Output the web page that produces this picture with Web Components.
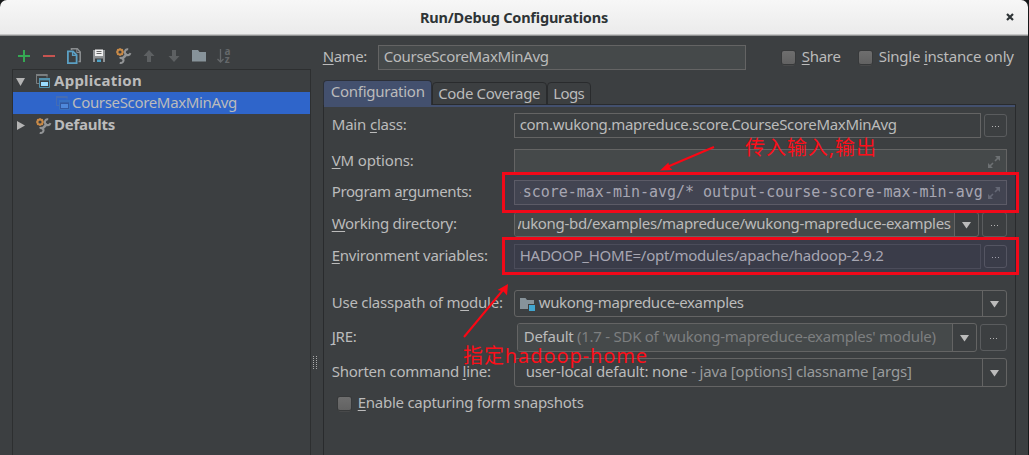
<!DOCTYPE html>
<html lang="en">
<head>
<meta charset="utf-8">
<title>Run/Debug Configurations</title>
<style>
html,body{margin:0;width:1029px;height:455px;overflow:hidden;background:#17191a}
body{font-family:"Noto Sans","Open Sans",sans-serif;font-size:15px;color:#bbb}
</style>
</head>
<body>
<run-dialog></run-dialog>
<script>
const define = (name, html, setup) => {
  const t = document.createElement('template');
  t.innerHTML = html;
  customElements.define(name, class extends HTMLElement {
    constructor() {
      super();
      this.attachShadow({mode: 'open'}).append(t.content.cloneNode(true));
    }
    connectedCallback() { if (setup) setup(this, this.shadowRoot); }
  });
};

const U = '<style>u{text-decoration:underline;text-decoration-thickness:1px;text-underline-offset:2px;text-decoration-skip-ink:none}.dim{color:#7d7f80}.mid{color:#999b9c}*{box-sizing:border-box}</style>';

/* Text run tracked so that it spans the width given in "w". */
define('fit-text', `<style>:host{display:block;flex:none;white-space:pre;line-height:20px;padding-bottom:var(--lift,4px)}span{display:inline-block;white-space:pre}</style><span><slot></slot></span>`, (el, r) => {
  const w = parseFloat(el.getAttribute('w'));
  const s = r.querySelector('span');
  const n = el.textContent.length;
  const real = s.getBoundingClientRect().width;
  if (real && w && n) s.style.letterSpacing = ((w - real) / n).toFixed(4) + 'px';
});

const wrench = `<g fill="none"><circle cx="4" cy="4" r="2.6" stroke="#c88a48" stroke-width="2"/><path d="M4 0v1.4M4 6.6V8M0 4h1.4M6.6 4H8M1.2 1.2l1 1M5.8 5.8l1 1M6.8 1.2l-1 1M1.2 6.8l1-1" stroke="#c88a48" stroke-width="1.2"/><path d="M5.6 11.4 11 6" stroke="#929496" stroke-width="2.6"/><path d="M12.2 1.3a2.9 2.9 0 1 0 2.3 3.9" stroke="#929496" stroke-width="2"/><path d="M3.6 10.3a2.5 2.5 0 1 1 .2 4.3" stroke="#929496" stroke-width="2"/></g>`;
const appIcon = `<path d="M.5 9.5v-9h10.5v3M.5 9.5H3" fill="none" stroke="#7b7f81"/><path d="M0 0h11.5v2H0z" fill="#7b7f81"/><path d="M3.5 4.5h10v9h-10z" fill="#3c3f41" stroke="#5292ad"/><path d="M3 4h11v2.4H3z" fill="#5292ad"/><path d="M5 8h7v4H5z" fill="#9bdcff"/>`;
const icons = {
  add: '<path d="M2 8h12M8 2v12" stroke="#35a853" stroke-width="2"/>',
  remove: '<path d="M2 8h12" stroke="#c75450" stroke-width="2"/>',
  copy: '<path d="M5.5 1V.8h5.8L14.2 4v9.5H12.5M5.5 1v1" fill="none" stroke="#8a8d8f" stroke-width="1.6"/><path d="M10.8 1v3.5h3.5" fill="none" stroke="#8a8d8f"/><path d="M1.9 3.4h5L10.6 7v8.2H1.9z" fill="#3c3f41" stroke="#5ba0c4" stroke-width="1.8"/><path d="M6.6 3v4.4H11" fill="none" stroke="#5ba0c4" stroke-width="1.4"/>',
  save: '<path d="M2 2h12v12H2z" fill="#8f9294"/><path d="M4 1.5h8V8H4z" fill="#f0f0f0"/><path d="M5.5 3.5h5M5.5 5.5h5" stroke="#666"/><path d="M4 10.5h8V14H4z" fill="#3c3f41"/><path d="M6 11.5h4V14H6z" fill="#4da3c7"/>',
  edit: wrench,
  up: '<path d="M8 2l5.5 6H10v6H6V8H2.5z" fill="#5d6062"/>',
  down: '<path d="M8 14l5.5-6H10V2H6v6H2.5z" fill="#5d6062"/>',
  folder: '<path d="M1 2h6l1.5 2H15v9.5H1z" fill="#87939a"/>',
  sort: '<path d="M4.5 1v13M1.5 11l3 3 3-3" fill="none" stroke="#65686a" stroke-width="1.3"/><text x="8.6" y="6.5" font-family="Noto Sans" font-size="10" font-weight="bold" fill="#65686a">a</text><text x="8.8" y="15" font-family="Noto Sans" font-size="10" font-weight="bold" fill="#65686a">z</text>',
  app: appIcon,
  module: '<path d="M0 1h5.5l1.5 2h7v9H0z" fill="#87939a"/><path d="M8 7h7v7H8z" fill="#3c3f41"/><path d="M9 8h6v6H9z" fill="#40a6d1"/>',
  open: '<path d="M0 1h9L4.5 9z" fill="#b4b4b4"/>',
  closed: '<path d="M1 0v9l8-4.5z" fill="#b4b4b4"/>',
  drop: '<path d="M0 0h9L4.5 6.5z" fill="#bbb"/>',
  expand: '<path d="M7 0H12v5zM0 7V12h5z" fill="#6d7173"/><path d="M7 5l3-3M5 7l-3 3" stroke="#6d7173" stroke-width="1.6"/>',
  close: '<path d="M1 1l6 6M7 1L1 7" stroke="#2e3436" stroke-width="2.2"/>'
};
define('ui-icon', `<style>:host{display:block;flex:none}svg{display:block;overflow:visible}</style><svg></svg>`, (el, r) => {
  const w = el.getAttribute('w') || 16, h = el.getAttribute('h') || 16, s = r.querySelector('svg');
  s.setAttribute('width', w); s.setAttribute('height', h);
  s.innerHTML = icons[el.getAttribute('name')];
});

define('title-bar', `<style>:host{display:grid;grid-template-columns:1fr auto 1fr;align-items:center;height:36px;box-sizing:border-box;padding-bottom:1px;background:linear-gradient(#f7f7f7,#ebebeb 34px,#9d9e9e 35px,#7e8081);border-radius:7px 7px 0 0;color:#2e3436;font-weight:bold;font-size:14.5px;--lift:1px}
ui-icon{justify-self:end;margin:-2px 14px 0 0}fit-text{grid-column:2}</style><fit-text w="188">Run/Debug Configurations</fit-text><ui-icon name="close" w="8" h="8"></ui-icon>`);

define('tool-bar', `<style>:host{display:flex;height:33px;padding:12px 0 0 4px;gap:9px;box-sizing:border-box}</style>` +
  ['add','remove','copy','save','edit','up','down','folder','sort'].map(n => `<ui-icon name="${n}"></ui-icon>`).join(''));

define('tree-row', `<style>:host{display:flex;align-items:center;height:22px;box-sizing:border-box;padding-left:3px;font-weight:bold;--lift:2px}
:host([selected]){background:#2f65ca;font-weight:normal;padding-left:43px}
:host([selected]) .ic{opacity:.3}.ic{width:18px}:host([selected]) .ic{width:16px}</style><slot name="arrow"></slot><div class="ic"><slot name="icon"></slot></div><slot></slot>`);

define('config-tree', `<style>:host{display:block;flex:1;box-sizing:border-box;border:1px solid #2d2f30;border-bottom:0}
.a{width:20px}</style>
<tree-row><ui-icon class="a" slot="arrow" name="open" w="9" h="9"></ui-icon><ui-icon slot="icon" name="app" w="14" h="14"></ui-icon><fit-text w="88">Application</fit-text></tree-row>
<tree-row selected><ui-icon slot="icon" name="app" w="14" h="14"></ui-icon><fit-text w="165">CourseScoreMaxMinAvg</fit-text></tree-row>
<tree-row><ui-icon class="a" slot="arrow" name="closed" w="9" h="9"></ui-icon><ui-icon slot="icon" name="edit" w="14" h="14"></ui-icon><fit-text w="61">Defaults</fit-text></tree-row>`);

define('check-box', `<style>:host{display:flex;align-items:center;gap:7px}i{display:block;width:13px;height:13px;border-radius:2px;background:linear-gradient(#6e6e6e,#626262);box-shadow:0 0 0 1px #37393a,0 1.5px 0 #555;flex:none}</style><i></i><slot></slot>`);

define('text-field', `<style>:host{display:flex;align-items:center;box-sizing:border-box;height:25px;border:1px solid #646464;background:#45494a;padding:0 5px;flex:1;min-width:0;overflow:hidden}
:host([plain]){background:#3c3f41}:host([disabled]){border-color:#505254}
ui-icon{display:none;margin:0 1px 0 auto}:host([expand]) ui-icon{display:block}.clip{display:flex}:host([right]) .clip{width:463px;flex:none;overflow:hidden;justify-content:flex-end}</style><div class="clip"><slot></slot></div><ui-icon name="expand" w="12" h="12"></ui-icon>`);

define('combo-box', `<style>:host{display:flex;box-sizing:border-box;height:27px;border:1px solid #646464;border-radius:3px;flex:1;min-width:0;overflow:hidden}
.v{flex:1;min-width:0;display:flex;align-items:center;padding-left:4px}.c{display:flex;align-items:center;gap:4px;flex:1;min-width:0;overflow:hidden}:host([editable]) .v{background:#45494a}:host([right]) .v{padding:0 3px}:host([right]) .c{justify-content:flex-end}
.d{width:23px;border-left:1px solid #646464;display:flex;align-items:center;justify-content:center;flex:none}</style><div class="v"><div class="c"><slot></slot></div></div><div class="d"><ui-icon name="drop" w="9" h="6"></ui-icon></div>`);

define('more-button', `<style>:host{display:flex;align-items:center;justify-content:center;gap:2px;box-sizing:border-box;width:23px;height:23px;border:1px solid #5a5c5e;border-radius:3px;flex:none}i{width:1px;height:1px;background:#b4b4b4;margin-top:2px}</style><i></i><i></i><i></i>`);

define('form-row', `<style>:host{display:grid;grid-template-columns:182px 493px;align-items:center;height:var(--h,25px);margin-top:var(--t,0)}
.f{display:flex;align-items:center;gap:3px;min-width:0}</style><slot name="label"></slot><div class="f"><slot></slot></div>`);

define('tab-item', `<style>:host{display:flex;box-sizing:border-box;height:23px;align-items:center;justify-content:center;border:1px solid #292b2d;border-radius:4px 4px 0 0;--lift:2px}
:host([active]){height:25px;background:#43506e;border-color:#2c3038;border-bottom:0}:host([active]) div{margin:-3px 0 0 1px}</style><div><slot></slot></div>`);

define('tab-strip', `<style>:host{display:flex;align-items:flex-end;height:25px;margin-bottom:-1px;position:relative;z-index:1}</style>
<tab-item active style="width:109px"><fit-text w="94">Configuration</fit-text></tab-item><tab-item style="width:115px"><fit-text w="102">Code Coverage</fit-text></tab-item><tab-item style="width:44px"><fit-text w="31">Logs</fit-text></tab-item>`);

define('config-form', `${U}<style>:host{display:block;flex:1;width:693px;box-sizing:border-box;border:1px solid #292b2d;border-bottom:0;padding:0 0 0 8px}
.strip{height:2px;background:#43506e;margin:0 0 6px -8px}.mono{font-family:"DejaVu Sans Mono",monospace;--lift:2px}</style>
<div class="strip"></div>
<form-row><fit-text slot="label" w="75">Main <u>c</u>lass:</fit-text><text-field plain><fit-text w="377">com.wukong.mapreduce.score.CourseScoreMaxMinAvg</fit-text></text-field><more-button></more-button></form-row>
<form-row style="--t:11px"><fit-text slot="label" w="82"><u>V</u>M options:</fit-text><text-field expand></text-field></form-row>
<form-row style="--t:6px"><fit-text slot="label" w="140">Program a<u>r</u>guments:</fit-text><text-field expand right><fit-text class="mono" w="469">-score-max-min-avg/* output-course-score-max-min-avg</fit-text></text-field></form-row>
<form-row style="--t:7px"><fit-text slot="label" w="125"><u>W</u>orking directory:</fit-text><combo-box editable right style="height:25px"><fit-text w="441">wukong-bd/examples/mapreduce/wukong-mapreduce-examples</fit-text></combo-box><more-button style="width:25px;height:25px"></more-button></form-row>
<form-row style="--t:7px"><fit-text slot="label" w="156"><u>E</u>nvironment variables:</fit-text><text-field plain disabled><fit-text w="364">HADOOP_HOME=/opt/modules/apache/hadoop-2.9.2</fit-text></text-field><more-button></more-button></form-row>
<form-row style="--h:27px;--t:21px"><fit-text slot="label" w="171">Use classpath of m<u>o</u>dule:</fit-text><combo-box><ui-icon name="module" w="16" h="14" style="margin-left:1px"></ui-icon><fit-text w="205" style="margin-left:-1px">wukong-mapreduce-examples</fit-text></combo-box></form-row>
<form-row style="--h:29px;--t:6px"><fit-text slot="label" w="25"><u>J</u>RE:</fit-text><combo-box editable style="height:29px;margin-left:3px"><fit-text w="412" style="margin-left:2px">Default <span class="dim">(1.7 - SDK of 'wukong-mapreduce-examples' module)</span></fit-text></combo-box><more-button style="width:27px;height:27px"></more-button></form-row>
<form-row style="--h:29px;--t:6px"><fit-text slot="label" w="159">Shorten command <u>l</u>ine:</fit-text><combo-box style="height:29px"><fit-text w="386" style="margin-left:7px">user-local default: none<span class="mid"> - java [options] classname [args]</span></fit-text></combo-box></form-row>
<check-box style="margin:5px 0 0 6px;--lift:3px"><fit-text w="226"><u>E</u>nable capturing form snapshots</fit-text></check-box>`);

define('split-grip', `<style>:host{display:flex;width:4px;flex:none;margin:0 6px 0 2px;align-items:flex-start}i{display:block;width:4px;height:14px;margin-top:320px;background:radial-gradient(circle at .5px .5px,#aaa .7px,transparent .8px) 0 0/3px 2px}</style><i></i>`);

/* Hand-drawn notes lying over the form. */
define('mark-up', `<style>:host{position:absolute;inset:0;z-index:2;pointer-events:none}svg{position:absolute;inset:0}fit-text{position:absolute;color:#fb0f1a;font-family:"Noto Sans","Noto Sans CJK SC",sans-serif;font-size:20px;line-height:28px}</style>
<svg width="1029" height="455"><g fill="rgba(50,40,130,.14)" stroke="#f10919" stroke-width="3"><path d="M503.5 173.5h514v38h-514z"/><path d="M503.5 238.5h514v35h-514z"/></g>
<g stroke="#fb0714" stroke-width="2" fill="#fb0714"><path d="M714 147 667 167"/><path d="M660 170.5l8.5-8 .5 4 3.5 3.5z" stroke="none"/><path d="M464 337 503 290"/><path d="M508 284l-1 11.5-3.5-4-6-1.5z" stroke="none"/></g></svg>
<fit-text w="132" style="left:745px;top:134px">传入输入,输出</fit-text>
<fit-text w="185" style="left:463px;top:342px">指定hadoop-home</fit-text>`);

define('run-dialog', `${U}<style>:host{display:flex;flex-direction:column;position:relative;width:1028px;height:455px}
.body{display:flex;flex:1;background:#3c3f41;min-height:0}.left{display:flex;flex-direction:column;width:299px;margin-left:12px}.right{display:flex;flex-direction:column;width:706px}
.name{display:flex;align-items:center;height:25px;margin-top:9px;margin-bottom:10px}</style>
<title-bar></title-bar>
<div class="body"><div class="left"><tool-bar></tool-bar><config-tree></config-tree></div><split-grip></split-grip>
<div class="right"><div class="name"><fit-text w="44" style="width:55px"><u>N</u>ame:</fit-text><text-field style="flex:0 0 368px"><fit-text w="165">CourseScoreMaxMinAvg</fit-text></text-field><check-box style="margin-left:36px"><fit-text w="39"><u>S</u>hare</fit-text></check-box><check-box style="margin-left:18px"><fit-text w="135">Single <u>i</u>nstance only</fit-text></check-box></div>
<tab-strip></tab-strip><config-form></config-form></div></div>
<mark-up></mark-up>`);
</script>
</body>
</html>
